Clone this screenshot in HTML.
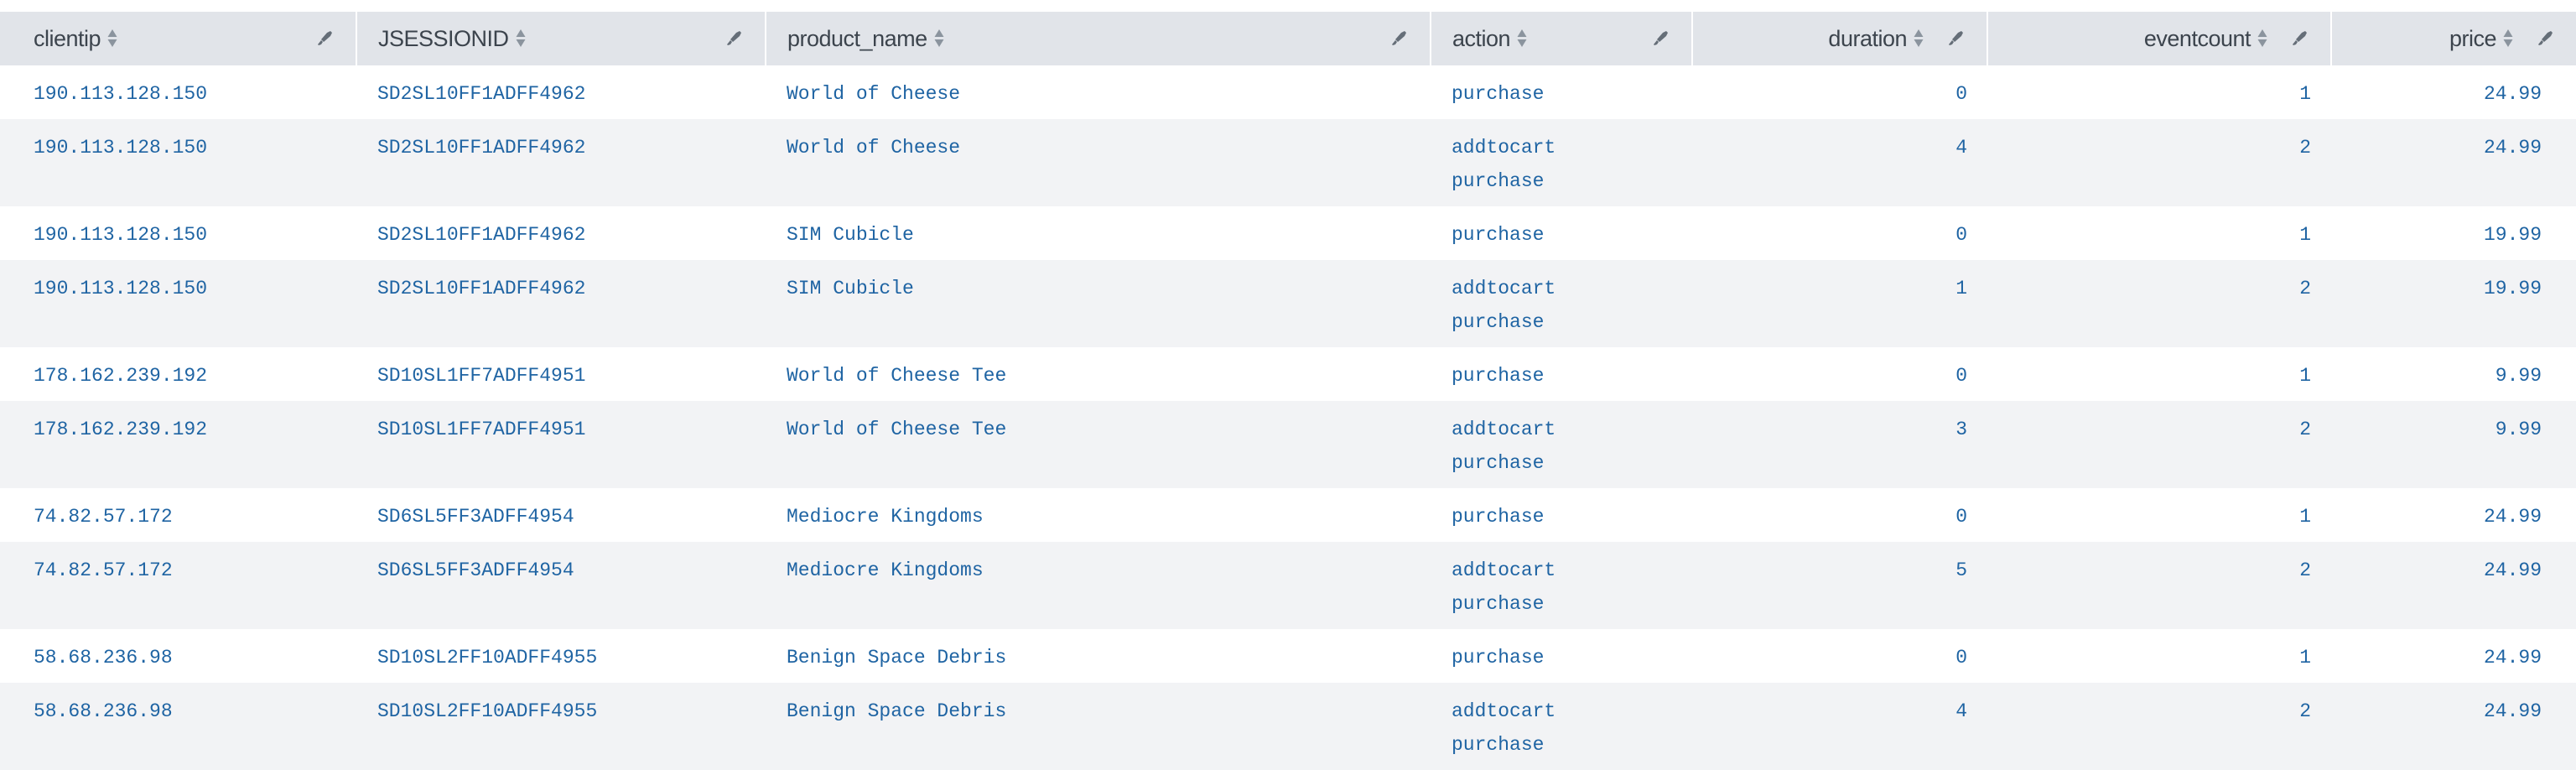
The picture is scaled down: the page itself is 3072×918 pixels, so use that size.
<!DOCTYPE html>
<html><head><meta charset="utf-8"><style>
html,body{margin:0;padding:0;background:#fff;width:3072px;height:918px;overflow:hidden}
table{position:absolute;left:0;top:14px;border-collapse:collapse;table-layout:fixed;width:3072px}
th{background:#e1e4e9;height:64px;padding:0;font-family:"Liberation Sans",sans-serif;font-weight:normal;font-size:27px;color:#3c444d;position:relative;text-align:left;border-left:2px solid #fff;letter-spacing:-0.5px}
th:first-child{border-left:none}
th .t{position:absolute;top:0;line-height:64px;white-space:nowrap}
th .p{position:absolute;right:27px;top:21px;width:20px;height:20px}
th.l .t{left:25px}
th.l:first-child .t{left:40px}
th.r .t{right:75px}
td{padding:14px 25px 10px 25px;vertical-align:top;font-family:"Liberation Mono",monospace;font-size:23px;line-height:40px;color:#1f64a3;white-space:nowrap}
td:first-child{padding-left:40px}
td.r{text-align:right;padding-right:24px}
td.r:last-child{padding-right:41px}
tr.s td{background:#f2f3f5}
.si{display:inline-block;vertical-align:middle;margin-left:8px;margin-top:-4px}
</style></head><body>
<svg width="0" height="0" style="position:absolute"><defs>
<symbol id="pen" viewBox="0 0 20 20"><path d="M13 4 L17 2 L19 4 L17 8 L9 15 L6 12 Z" fill="#656e78"/><path d="M6 13 L8 15 L6 18 L3 19 L2 18 Z" fill="#656e78"/></symbol>
<symbol id="srt" viewBox="0 0 12 24"><path d="M6 1 L11.5 10 L0.5 10 Z" fill="#8b949e"/><path d="M0.5 13 L11.5 13 L6 22 Z" fill="#8b949e"/></symbol>
</defs></svg>
<table>
<colgroup><col style="width:425px"><col style="width:488px"><col style="width:793px"><col style="width:312px"><col style="width:352px"><col style="width:410px"><col style="width:292px"></colgroup>
<tr>
<th class="l"><span class="t">clientip<svg class="si" width="12" height="24"><use href="#srt"/></svg></span><svg class="p"><use href="#pen"/></svg></th>
<th class="l"><span class="t">JSESSIONID<svg class="si" width="12" height="24"><use href="#srt"/></svg></span><svg class="p"><use href="#pen"/></svg></th>
<th class="l"><span class="t">product_name<svg class="si" width="12" height="24"><use href="#srt"/></svg></span><svg class="p"><use href="#pen"/></svg></th>
<th class="l"><span class="t">action<svg class="si" width="12" height="24"><use href="#srt"/></svg></span><svg class="p"><use href="#pen"/></svg></th>
<th class="r"><span class="t">duration<svg class="si" width="12" height="24"><use href="#srt"/></svg></span><svg class="p"><use href="#pen"/></svg></th>
<th class="r"><span class="t">eventcount<svg class="si" width="12" height="24"><use href="#srt"/></svg></span><svg class="p"><use href="#pen"/></svg></th>
<th class="r"><span class="t">price<svg class="si" width="12" height="24"><use href="#srt"/></svg></span><svg class="p"><use href="#pen"/></svg></th>
</tr>
<tr><td>190.113.128.150</td><td>SD2SL10FF1ADFF4962</td><td>World of Cheese</td><td>purchase</td><td class="r">0</td><td class="r">1</td><td class="r">24.99</td></tr>
<tr class="s"><td>190.113.128.150</td><td>SD2SL10FF1ADFF4962</td><td>World of Cheese</td><td>addtocart<br>purchase</td><td class="r">4</td><td class="r">2</td><td class="r">24.99</td></tr>
<tr><td>190.113.128.150</td><td>SD2SL10FF1ADFF4962</td><td>SIM Cubicle</td><td>purchase</td><td class="r">0</td><td class="r">1</td><td class="r">19.99</td></tr>
<tr class="s"><td>190.113.128.150</td><td>SD2SL10FF1ADFF4962</td><td>SIM Cubicle</td><td>addtocart<br>purchase</td><td class="r">1</td><td class="r">2</td><td class="r">19.99</td></tr>
<tr><td>178.162.239.192</td><td>SD10SL1FF7ADFF4951</td><td>World of Cheese Tee</td><td>purchase</td><td class="r">0</td><td class="r">1</td><td class="r">9.99</td></tr>
<tr class="s"><td>178.162.239.192</td><td>SD10SL1FF7ADFF4951</td><td>World of Cheese Tee</td><td>addtocart<br>purchase</td><td class="r">3</td><td class="r">2</td><td class="r">9.99</td></tr>
<tr><td>74.82.57.172</td><td>SD6SL5FF3ADFF4954</td><td>Mediocre Kingdoms</td><td>purchase</td><td class="r">0</td><td class="r">1</td><td class="r">24.99</td></tr>
<tr class="s"><td>74.82.57.172</td><td>SD6SL5FF3ADFF4954</td><td>Mediocre Kingdoms</td><td>addtocart<br>purchase</td><td class="r">5</td><td class="r">2</td><td class="r">24.99</td></tr>
<tr><td>58.68.236.98</td><td>SD10SL2FF10ADFF4955</td><td>Benign Space Debris</td><td>purchase</td><td class="r">0</td><td class="r">1</td><td class="r">24.99</td></tr>
<tr class="s"><td>58.68.236.98</td><td>SD10SL2FF10ADFF4955</td><td>Benign Space Debris</td><td>addtocart<br>purchase</td><td class="r">4</td><td class="r">2</td><td class="r">24.99</td></tr>
</table>
</body></html>
